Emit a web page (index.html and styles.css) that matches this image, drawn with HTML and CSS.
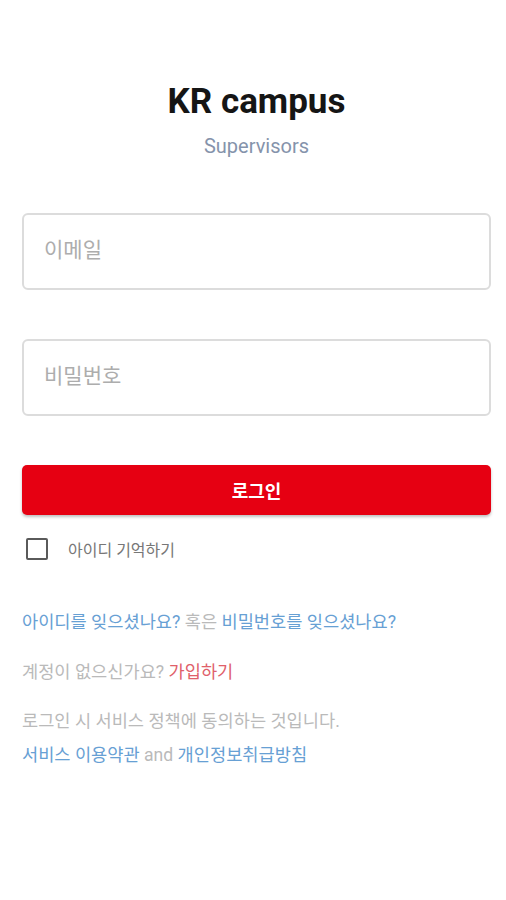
FILE: index.html
```html
<!DOCTYPE html>
<html lang="ko">
<head>
<meta charset="UTF-8">
<meta name="viewport" content="width=device-width, initial-scale=1.0">
<title>KR campus</title>
<link rel="stylesheet" href="styles.css">
</head>
<body>

<div class="container">
    <div class="header">
        <h1 class="title">KR campus</h1>
        <div class="subtitle">Supervisors</div>
    </div>

    <form class="login-form" onsubmit="return false">
        <input type="email" class="field" placeholder="이메일">
        <input type="password" class="field field-gap" placeholder="비밀번호">
        <button type="submit" class="login-button">로그인</button>
        <label class="remember">
            <span class="checkbox"></span>
            <span class="remember-text">아이디 기억하기</span>
        </label>
    </form>

    <div class="links">
        <p class="line">
            <a href="#" class="link">아이디를 잊으셨나요?</a> 혹은 <a href="#" class="link">비밀번호를 잊으셨나요?</a>
        </p>
        <p class="line line-signup">
            계정이 없으신가요? <a href="#" class="link-red">가입하기</a>
        </p>
        <p class="line line-policy">로그인 시 서비스 정책에 동의하는 것입니다.</p>
        <p class="line line-terms">
            <a href="#" class="link">서비스 이용약관</a> and <a href="#" class="link">개인정보취급방침</a>
        </p>
    </div>
</div>

</body>
</html>
```

FILE: styles.css
```css
body {
    font-family: Roboto, "Noto Sans CJK KR", sans-serif;
    margin: 0;
    padding: 0;
    background-color: #fff;
}
.container {
    padding: 0 15px 0 22px;
}
.header {
    text-align: center;
    padding-top: 80px;
}
.title {
    margin: 0;
    font-size: 35px;
    font-weight: 700;
    color: #151515;
    line-height: 44px;
}
.subtitle {
    margin-top: 10px;
    font-size: 20px;
    color: #8593ab;
    line-height: 24px;
}
.login-form {
    display: flex;
    flex-direction: column;
    margin-top: 55px;
}
.field {
    height: 77px;
    box-sizing: border-box;
    border: 2px solid #dcdcdc;
    border-radius: 6px;
    padding: 0 20px 3px;
    font-family: inherit;
    font-size: 21px;
    color: #333;
    outline: none;
}
.field::placeholder {
    color: #adadad;
}
.field-gap {
    margin-top: 49px;
}
.login-button {
    margin-top: 49px;
    height: 50px;
    border: none;
    border-radius: 5px;
    background-color: #e60012;
    color: #fff;
    font-family: inherit;
    font-size: 18px;
    font-weight: 700;
    box-shadow: 0 2px 3px rgba(0, 0, 0, 0.25);
    cursor: pointer;
}
.remember {
    display: flex;
    align-items: center;
    margin-top: 22px;
    padding-left: 4px;
}
.checkbox {
    width: 18px;
    height: 18px;
    border: 2px solid #5a5a5a;
    border-radius: 2px;
}
.remember-text {
    margin-left: 20px;
    font-size: 16px;
    color: #777;
}
.links {
    margin-top: 49px;
    font-size: 17.6px;
    color: #bababa;
}
.line {
    margin: 0 0 26px;
    line-height: 24px;
}
.line-signup {
    margin-bottom: 25px;
}
.line-policy {
    margin-bottom: 10px;
}
.link {
    color: #67a0d4;
    text-decoration: none;
}
.link-red {
    color: #e0606a;
    text-decoration: none;
}
```
